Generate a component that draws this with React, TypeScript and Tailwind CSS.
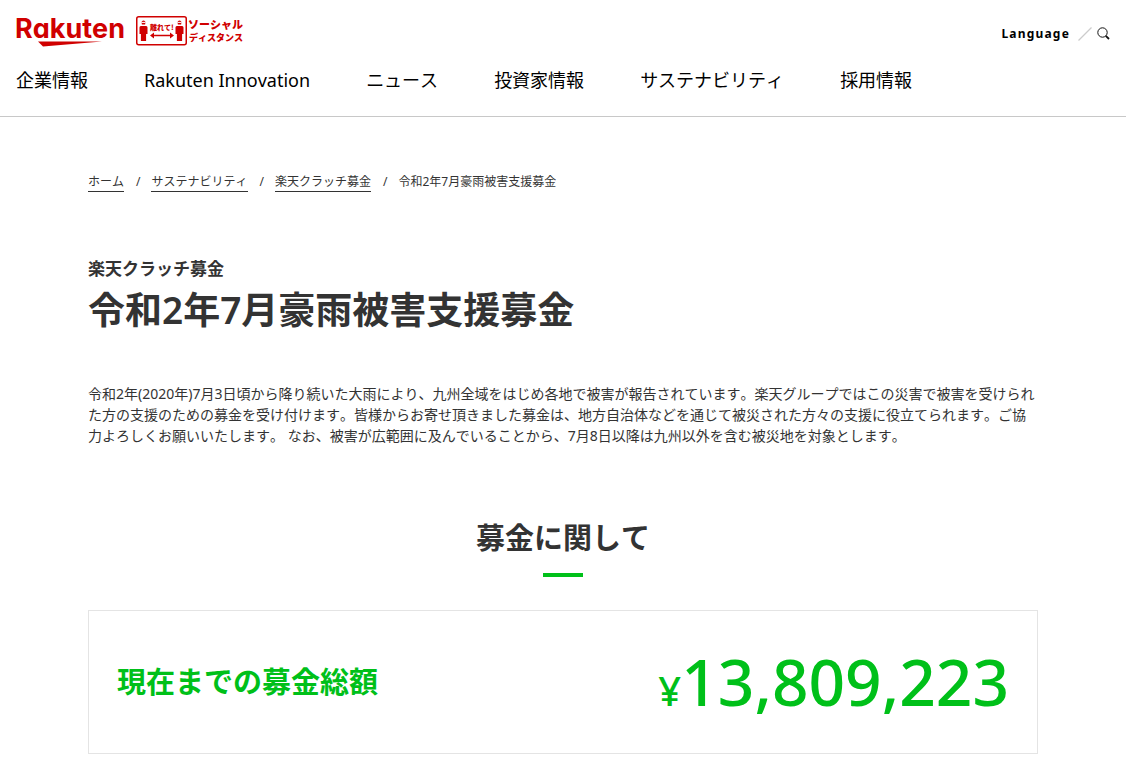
import { clsx } from "clsx";

const NAV_ITEMS = ["企業情報", "Rakuten Innovation", "ニュース", "投資家情報", "サステナビリティ", "採用情報"];

const CRUMBS = ["ホーム", "サステナビリティ", "楽天クラッチ募金"];

function RakutenLogo() {
  return (
    <svg width="116" height="38" viewBox="-4 -4 116 38" role="img" aria-label="Rakuten" fill="#d00000">
      <text
        x="-1"
        y="24"
        className="font-['Inter',sans-serif] text-[27px] font-bold [font-feature-settings:'cv11']"
      >
        Rakuten
      </text>
      <path d="M22 27.5H86L27 32.5Z" />
    </svg>
  );
}

function Person({ x }: { x: number }) {
  return (
    <g transform={`translate(${x} 0)`}>
      <path d="M2 6.5C2 3.8 6 3.8 6 6.5L5.6 8.4H2.4Z" />
      <path d="M1.8 6.4H6.2" stroke="#fff" strokeWidth="1" />
      <path d="M1.4 10H6.6Q8 10 8 11.5V18H6.6V25H1.4V18H0V11.5Q0 10 1.4 10Z" />
    </g>
  );
}

function DistanceLogo() {
  return (
    <svg
      width="108"
      height="30"
      viewBox="0 0 108 30"
      role="img"
      aria-label="離れて！ソーシャルディスタンス"
      fill="#d00000"
      className="font-['Noto_Sans_CJK_JP',sans-serif] font-black"
    >
      <rect x="0.75" y="0.75" width="49.5" height="28" rx="2" fill="none" stroke="#d00000" strokeWidth="1.5" />
      <Person x={3.5} />
      <Person x={39.5} />
      <text x="14" y="14" className="text-[7px]">
        離れて!
      </text>
      <path d="M14 19.5L18 16.5V18.7H34V16.5L38 19.5L34 22.5V20.3H18V22.5Z" />
      <text x="52" y="13" className="text-[11px]">
        ソーシャル
      </text>
      <text x="53" y="25" className="text-[9px]">
        ディスタンス
      </text>
    </svg>
  );
}

function SiteHeader() {
  return (
    <header className="border-b border-[#c8c8c8] px-4 pb-[22px] pt-2.5 text-black">
      <div className="flex items-start justify-between">
        <a href="#" className="-ml-1 flex items-start gap-2">
          <RakutenLogo />
          <span className="pt-1.5">
            <DistanceLogo />
          </span>
        </a>
        <div className="flex items-center pt-3.5">
          <button type="button" className="text-xs font-bold leading-5 tracking-widest">
            Language
          </button>
          <svg width="14" height="14" viewBox="0 0 14 14" className="ml-2" aria-hidden>
            <path d="M0.5 13.5L13.5 0.5" stroke="#ccc" strokeWidth="1.3" />
          </svg>
          <button type="button" aria-label="検索" className="ml-1">
            <svg width="14" height="14" viewBox="0 0 14 14" fill="none" stroke="#111">
              <circle cx="6.5" cy="5.5" r="4.7" />
              <path d="M9.8 8.8L13 12" strokeWidth="1.8" />
            </svg>
          </button>
        </div>
      </div>
      <nav className="mt-[18px] flex gap-14 text-lg leading-7">
        {NAV_ITEMS.map((item) => (
          <a key={item} href="#" className="whitespace-nowrap">
            {item}
          </a>
        ))}
      </nav>
    </header>
  );
}

function Breadcrumb() {
  return (
    <nav aria-label="breadcrumb">
      <ol className="flex text-xs leading-[18px]">
        {CRUMBS.map((crumb) => (
          <li key={crumb} className="flex">
            <a href="#" className="border-b border-[#333]">
              {crumb}
            </a>
            <span className="pl-3 pr-[11px]">/</span>
          </li>
        ))}
        <li>令和2年7月豪雨被害支援募金</li>
      </ol>
    </nav>
  );
}

function SectionTitle({ children, className }: { children: string; className?: string }) {
  return (
    <div className={clsx("flex flex-col items-center", className)}>
      <h2 className="text-[29px] font-semibold leading-10">{children}</h2>
      <span className="mt-[15px] h-1 w-10 bg-[#00c019]" />
    </div>
  );
}

export default function App() {
  return (
    <div
      lang="ja"
      className="min-h-screen bg-white font-['Noto_Sans','Noto_Sans_CJK_JP',sans-serif] text-[#333] [font-kerning:none]"
    >
      <SiteHeader />
      <main className="mx-[88px] pb-3.5 pt-14">
        <Breadcrumb />
        <p className="mt-[65px] text-[17px] font-bold leading-6">楽天クラッチ募金</p>
        <h1 className="mt-1 text-[37px] font-semibold leading-[50px]">令和2年7月豪雨被害支援募金</h1>
        <p className="mt-12 text-sm leading-[21px]">
          令和2年(2020年)7月3日頃から降り続いた大雨により、九州全域をはじめ各地で被害が報告されています。楽天グループではこの災害で被害を受けられた方の支援のための募金を受け付けます。皆様からお寄せ頂きました募金は、地方自治体などを通じて被災された方々の支援に役立てられます。ご協力よろしくお願いいたします。
          なお、被害が広範囲に及んでいることから、7月8日以降は九州以外を含む被災地を対象とします。
        </p>
        <SectionTitle className="mt-[72px]">募金に関して</SectionTitle>
        <section className="mt-[33px] flex items-center justify-between border border-[#e4e4e4] px-7 py-7 text-[#00c019]">
          <h3 className="text-[29px] font-semibold leading-10">現在までの募金総額</h3>
          <p className="text-[64px] font-medium leading-[86px]">
            <span className="text-[40px] leading-none">¥</span>13,809,223
          </p>
        </section>
      </main>
    </div>
  );
}
